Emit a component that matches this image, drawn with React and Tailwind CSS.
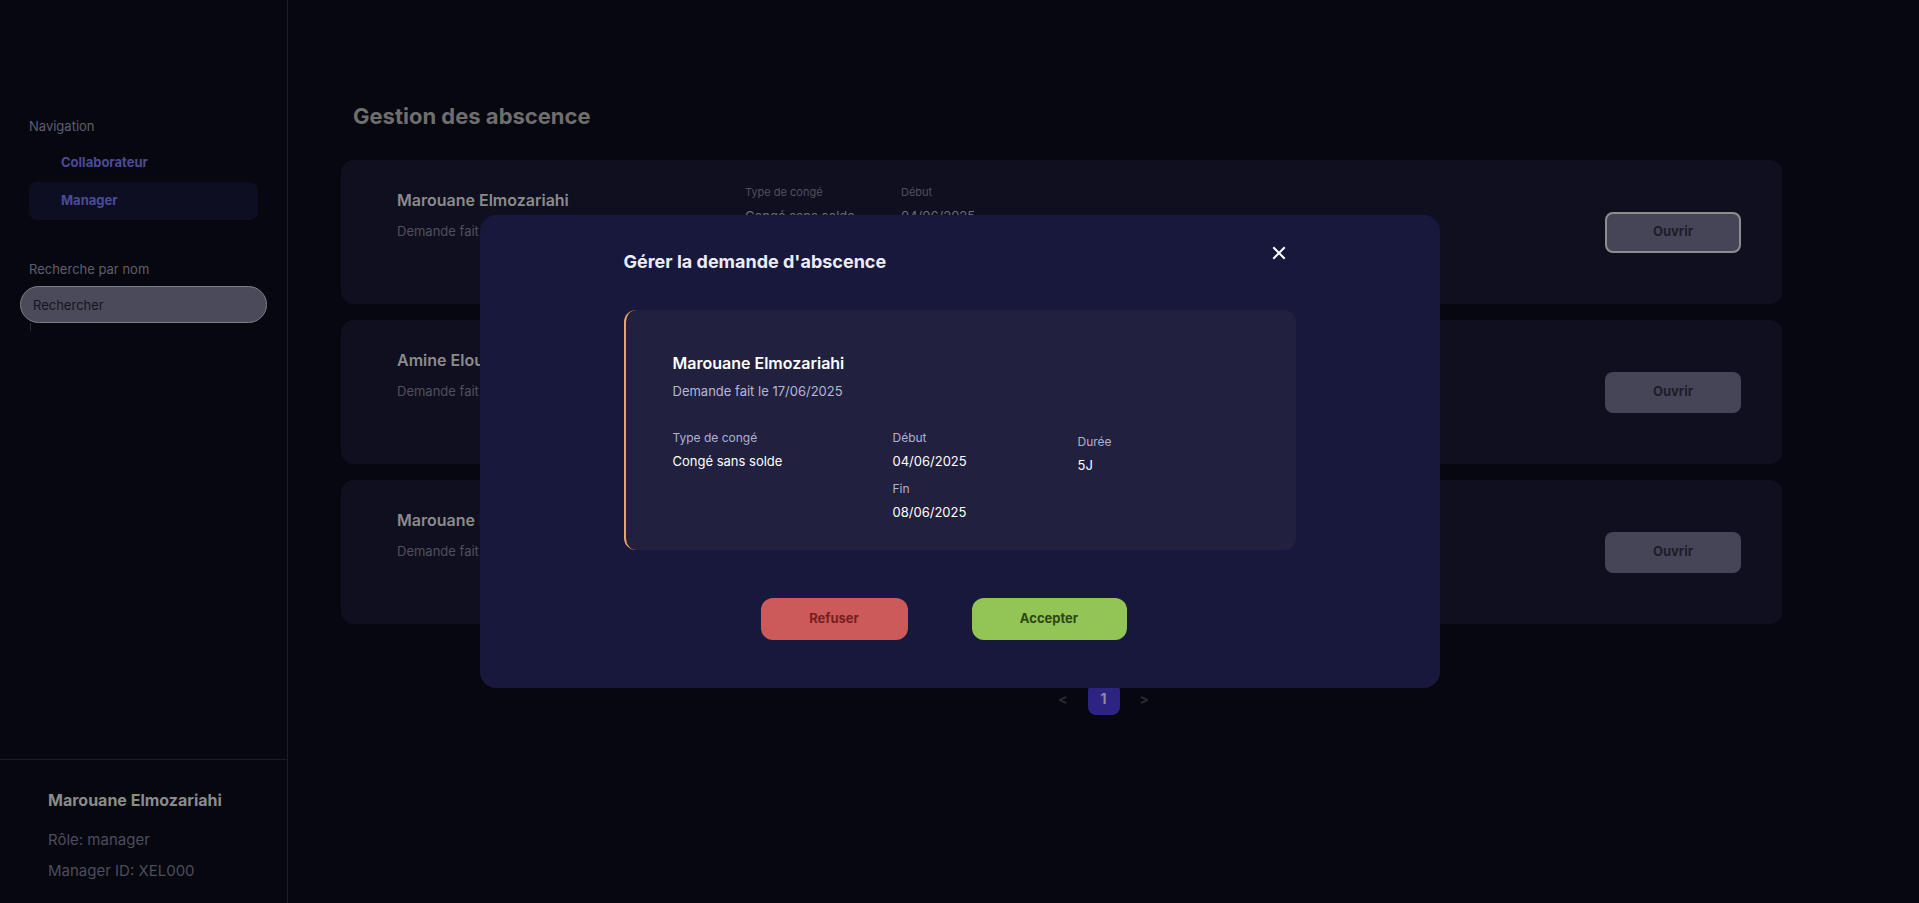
import { useState } from "react";

const demandes = [
  { id: 1, nom: "Marouane Elmozariahi", date: "17/06/2025", type: "Congé sans solde", debut: "04/06/2025", fin: "08/06/2025", duree: "5J" },
  { id: 2, nom: "Amine Elouardi", date: "16/06/2025", type: "Congé payé", debut: "10/06/2025", fin: "12/06/2025", duree: "3J" },
  { id: 3, nom: "Marouane Elmozariahi", date: "15/06/2025", type: "Congé maladie", debut: "01/06/2025", fin: "02/06/2025", duree: "2J" },
];

function Sidebar() {
  return (
    <aside className="flex h-screen w-[288px] shrink-0 flex-col border-r border-[#1b1b2a]">
      <div className="flex-1 px-[29px] pt-[116px]">
        <p className="text-[13px] leading-5 text-[#5e5e70]">Navigation</p>
        <nav className="mt-[8px] flex flex-col">
          <a className="flex h-[38px] items-center rounded-lg pl-[32px] text-[13px] font-bold text-[#4b4b95]">Collaborateur</a>
          <a className="flex h-[38px] items-center rounded-lg bg-[#0e0e23] pl-[32px] text-[13px] font-bold text-[#4b4b95]">Manager</a>
        </nav>
        <p className="mt-[39px] text-[13px] leading-5 text-[#5e5e70]">Recherche par nom</p>
        <input
          placeholder="Rechercher"
          className="-mx-[9px] mt-[7px] h-[37px] w-[247px] rounded-full border border-[#7d7d82] bg-[#4a4a5a] px-3 text-[13px] text-[#15151f] placeholder:text-[#15151f] focus:outline-none"
        />
        <div className="ml-px h-2 w-px bg-[#2a2a35]" />
      </div>
      <div className="h-[144px] border-t border-[#1b1b2a] pl-[48px] pt-[28px]">
        <p className="text-base font-bold leading-6 text-[#8b8b8b]">Marouane Elmozariahi</p>
        <p className="mt-[17px] text-[15px] leading-[22px] text-[#4d4d5d]">Rôle: manager</p>
        <p className="mt-[9px] text-[15px] leading-[22px] text-[#4d4d5d]">Manager ID: XEL000</p>
      </div>
    </aside>
  );
}

function Carte({ d, focus }) {
  return (
    <div className="flex h-[144px] items-start rounded-xl bg-[#0f0f20] pl-[56px] pr-[41px]">
      <div className="w-[348px] pt-[28px]">
        <p className="text-base font-semibold leading-6 text-[#8b8b8b]">{d.nom}</p>
        <p className="mt-[9px] text-[13px] leading-5 text-[#50505f]">Demande fait le {d.date}</p>
      </div>
      <div className="flex pt-[24px]">
        <div className="w-[156px]">
          <p className="text-[11px] leading-4 text-[#50505f]">Type de congé</p>
          <p className="mt-[6px] text-[13px] leading-5 text-[#6c6c7c]">{d.type}</p>
        </div>
        <div className="w-[156px]">
          <p className="text-[11px] leading-4 text-[#50505f]">Début</p>
          <p className="mt-[6px] text-[13px] leading-5 text-[#6c6c7c]">{d.debut}</p>
          <p className="mt-[10px] text-[11px] leading-4 text-[#50505f]">Fin</p>
          <p className="mt-[6px] text-[13px] leading-5 text-[#6c6c7c]">{d.fin}</p>
        </div>
        <div className="pt-[30px]">
          <p className="text-[11px] leading-4 text-[#50505f]">Durée</p>
          <p className="mt-[6px] text-[13px] leading-5 text-[#6c6c7c]">{d.duree}</p>
        </div>
      </div>
      <button
        className={
          "ml-auto self-center h-[41px] w-[136px] rounded-lg bg-[#454557] text-[13px] font-bold text-[#1c1c2c] " +
          (focus ? "border-2 border-[#8d8d8d]" : "border-2 border-transparent")
        }
      >
        Ouvrir
      </button>
    </div>
  );
}

function Modal({ d, onClose }) {
  return (
    <div className="fixed inset-0 flex items-center justify-center">
      <div className="relative h-[473px] w-[960px] rounded-2xl bg-[#18183c] px-[144px] pt-[33px]">
        <h2 className="text-lg font-bold leading-7 text-[#ececf5]">Gérer la demande d'abscence</h2>
        <button onClick={onClose} className="absolute left-[792px] top-[31px] text-white">
          <svg width="14" height="14" viewBox="0 0 14 14" fill="none" stroke="currentColor" strokeWidth="2" strokeLinecap="square">
            <path d="M2 2 L12 12 M12 2 L2 12" />
          </svg>
        </button>
        <div className="mt-[34px] h-[240px] rounded-xl border-l-2 border-[#f0a35a] bg-[#21213f] pl-[47px] pt-[41px]">
          <p className="text-base font-semibold leading-6 text-white">{d.nom}</p>
          <p className="mt-[6px] text-[13px] leading-5 text-[#b6b6d6]">Demande fait le {d.date}</p>
          <div className="mt-[29px] flex">
            <div className="w-[220px]">
              <p className="text-xs leading-4 text-[#b0b0d2]">Type de congé</p>
              <p className="mt-[5px] text-[13px] leading-5 text-white">{d.type}</p>
            </div>
            <div className="w-[185px]">
              <p className="text-xs leading-4 text-[#b0b0d2]">Début</p>
              <p className="mt-[5px] text-[13px] leading-5 text-white">{d.debut}</p>
              <p className="mt-[10px] text-xs leading-4 text-[#b0b0d2]">Fin</p>
              <p className="mt-[5px] text-[13px] leading-5 text-white">{d.fin}</p>
            </div>
            <div className="pt-1">
              <p className="text-xs leading-4 text-[#b0b0d2]">Durée</p>
              <p className="mt-[5px] text-[13px] leading-5 text-white">{d.duree}</p>
            </div>
          </div>
        </div>
        <div className="mt-[48px] flex justify-center gap-16 pr-[32px]">
          <button className="h-[42px] w-[147px] rounded-xl bg-[#cd5a5a] text-[13px] font-bold text-[#7a1d1d]">Refuser</button>
          <button className="h-[42px] w-[155px] rounded-xl bg-[#93c456] text-[13px] font-bold text-[#2d4714]">Accepter</button>
        </div>
      </div>
    </div>
  );
}

export default function App() {
  const [ouvert, setOuvert] = useState(demandes[0]);

  return (
    <div className="flex h-screen overflow-hidden bg-[#07070f]" style={{ fontFamily: "Inter, 'Noto Sans', sans-serif" }}>
      <Sidebar />
      <main className="flex-1 pt-[100px]">
        <div className="pl-[53px] pr-[137px]">
          <h1 className="ml-[12px] text-[22px] font-bold leading-8 text-[#6e6e6e]">Gestion des abscence</h1>
          <div className="mt-[28px] flex flex-col gap-4">
            {demandes.map((d, i) => (
              <Carte key={d.id} d={d} focus={i === 0} />
            ))}
          </div>
        </div>
        <div className="mt-[59px] flex items-center justify-center gap-5 text-sm font-bold">
          <span className="text-[#2a2a3a]">&lt;</span>
          <span className="flex h-[32px] w-[32px] items-center justify-center rounded-lg bg-[#2d2383] text-[#8c8ca0]">1</span>
          <span className="text-[#2a2a3a]">&gt;</span>
        </div>
      </main>
      {ouvert && <Modal d={ouvert} onClose={() => setOuvert(null)} />}
    </div>
  );
}
